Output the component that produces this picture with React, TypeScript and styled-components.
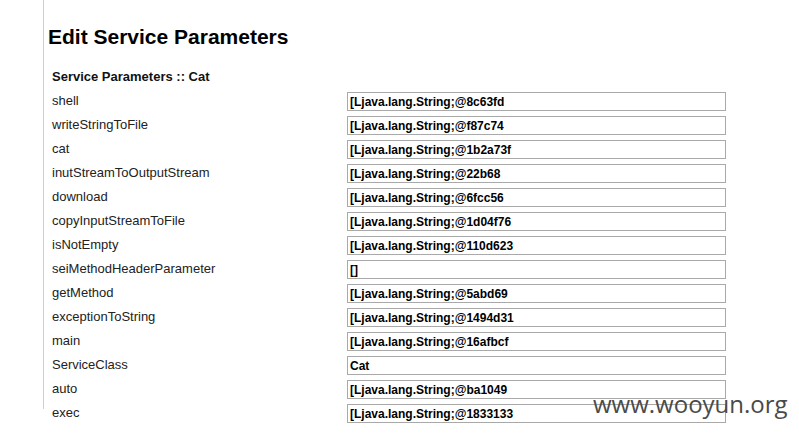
import React from "react";
import styled, { createGlobalStyle } from "styled-components";

const GlobalStyle = createGlobalStyle`
  html, body {
    margin: 0;
    padding: 0;
    background: #fff;
  }
  body {
    font-family: "Liberation Sans", Arial, sans-serif;
    color: #000;
  }
`;

const params: [string, string][] = [
  ["shell", "[Ljava.lang.String;@8c63fd"],
  ["writeStringToFile", "[Ljava.lang.String;@f87c74"],
  ["cat", "[Ljava.lang.String;@1b2a73f"],
  ["inutStreamToOutputStream", "[Ljava.lang.String;@22b68"],
  ["download", "[Ljava.lang.String;@6fcc56"],
  ["copyInputStreamToFile", "[Ljava.lang.String;@1d04f76"],
  ["isNotEmpty", "[Ljava.lang.String;@110d623"],
  ["seiMethodHeaderParameter", "[]"],
  ["getMethod", "[Ljava.lang.String;@5abd69"],
  ["exceptionToString", "[Ljava.lang.String;@1494d31"],
  ["main", "[Ljava.lang.String;@16afbcf"],
  ["ServiceClass", "Cat"],
  ["auto", "[Ljava.lang.String;@ba1049"],
  ["exec", "[Ljava.lang.String;@1833133"],
];

export default function App() {
  return (
    <>
      <GlobalStyle />
      <Page>
        <Sidebar />
        <Main>
          <Title>Edit Service Parameters</Title>
          <ParamTable>
            <tbody>
              <tr>
                <Caption colSpan={2}>Service Parameters :: Cat</Caption>
              </tr>
              {params.map(([name, value]) => (
                <tr key={name}>
                  <Label>{name}</Label>
                  <Field>
                    <ValueInput type="text" defaultValue={value} />
                  </Field>
                </tr>
              ))}
            </tbody>
          </ParamTable>
        </Main>
        <Watermark>www.wooyun.org</Watermark>
      </Page>
    </>
  );
}

const Page = styled.div`
  position: relative;
  display: flex;
  align-items: flex-start;
  width: 799px;
  height: 433px;
  overflow: hidden;
`;

const Sidebar = styled.div`
  width: 43px;
  height: 409px;
  border-right: 1px solid #cfcfcf;
  flex-shrink: 0;
`;

const Main = styled.div`
  padding-left: 4px;
`;

const Title = styled.h2`
  margin: 25px 0 15px;
  font-size: 21px;
  line-height: 24px;
  font-weight: bold;
  color: #000;
`;

const ParamTable = styled.table`
  border-collapse: collapse;
  border-spacing: 0;
`;

const Caption = styled.td`
  height: 24px;
  padding: 0 4px;
  font-size: 13px;
  font-weight: bold;
  color: #111;
`;

const Label = styled.td`
  width: 291px;
  height: 24px;
  padding: 0 4px;
  font-size: 13px;
  color: #222;
  vertical-align: middle;
  white-space: nowrap;
`;

const Field = styled.td`
  height: 24px;
  padding: 0;
  vertical-align: top;
`;

const ValueInput = styled.input`
  display: block;
  box-sizing: border-box;
  width: 379px;
  height: 19px;
  margin: 4px 0 0;
  padding: 0 2px;
  border: 1px solid #a9a9a9;
  font-family: "Liberation Sans", Arial, sans-serif;
  font-size: 12px;
  font-weight: bold;
  color: #000;
  background: #fff;
  outline: none;
`;

const Watermark = styled.div`
  position: absolute;
  left: 593px;
  top: 388px;
  font-family: "Open Sans", "DejaVu Sans", sans-serif;
  font-size: 24px;
  line-height: 32px;
  color: #4a4a4a;
  white-space: nowrap;
  pointer-events: none;
`;
